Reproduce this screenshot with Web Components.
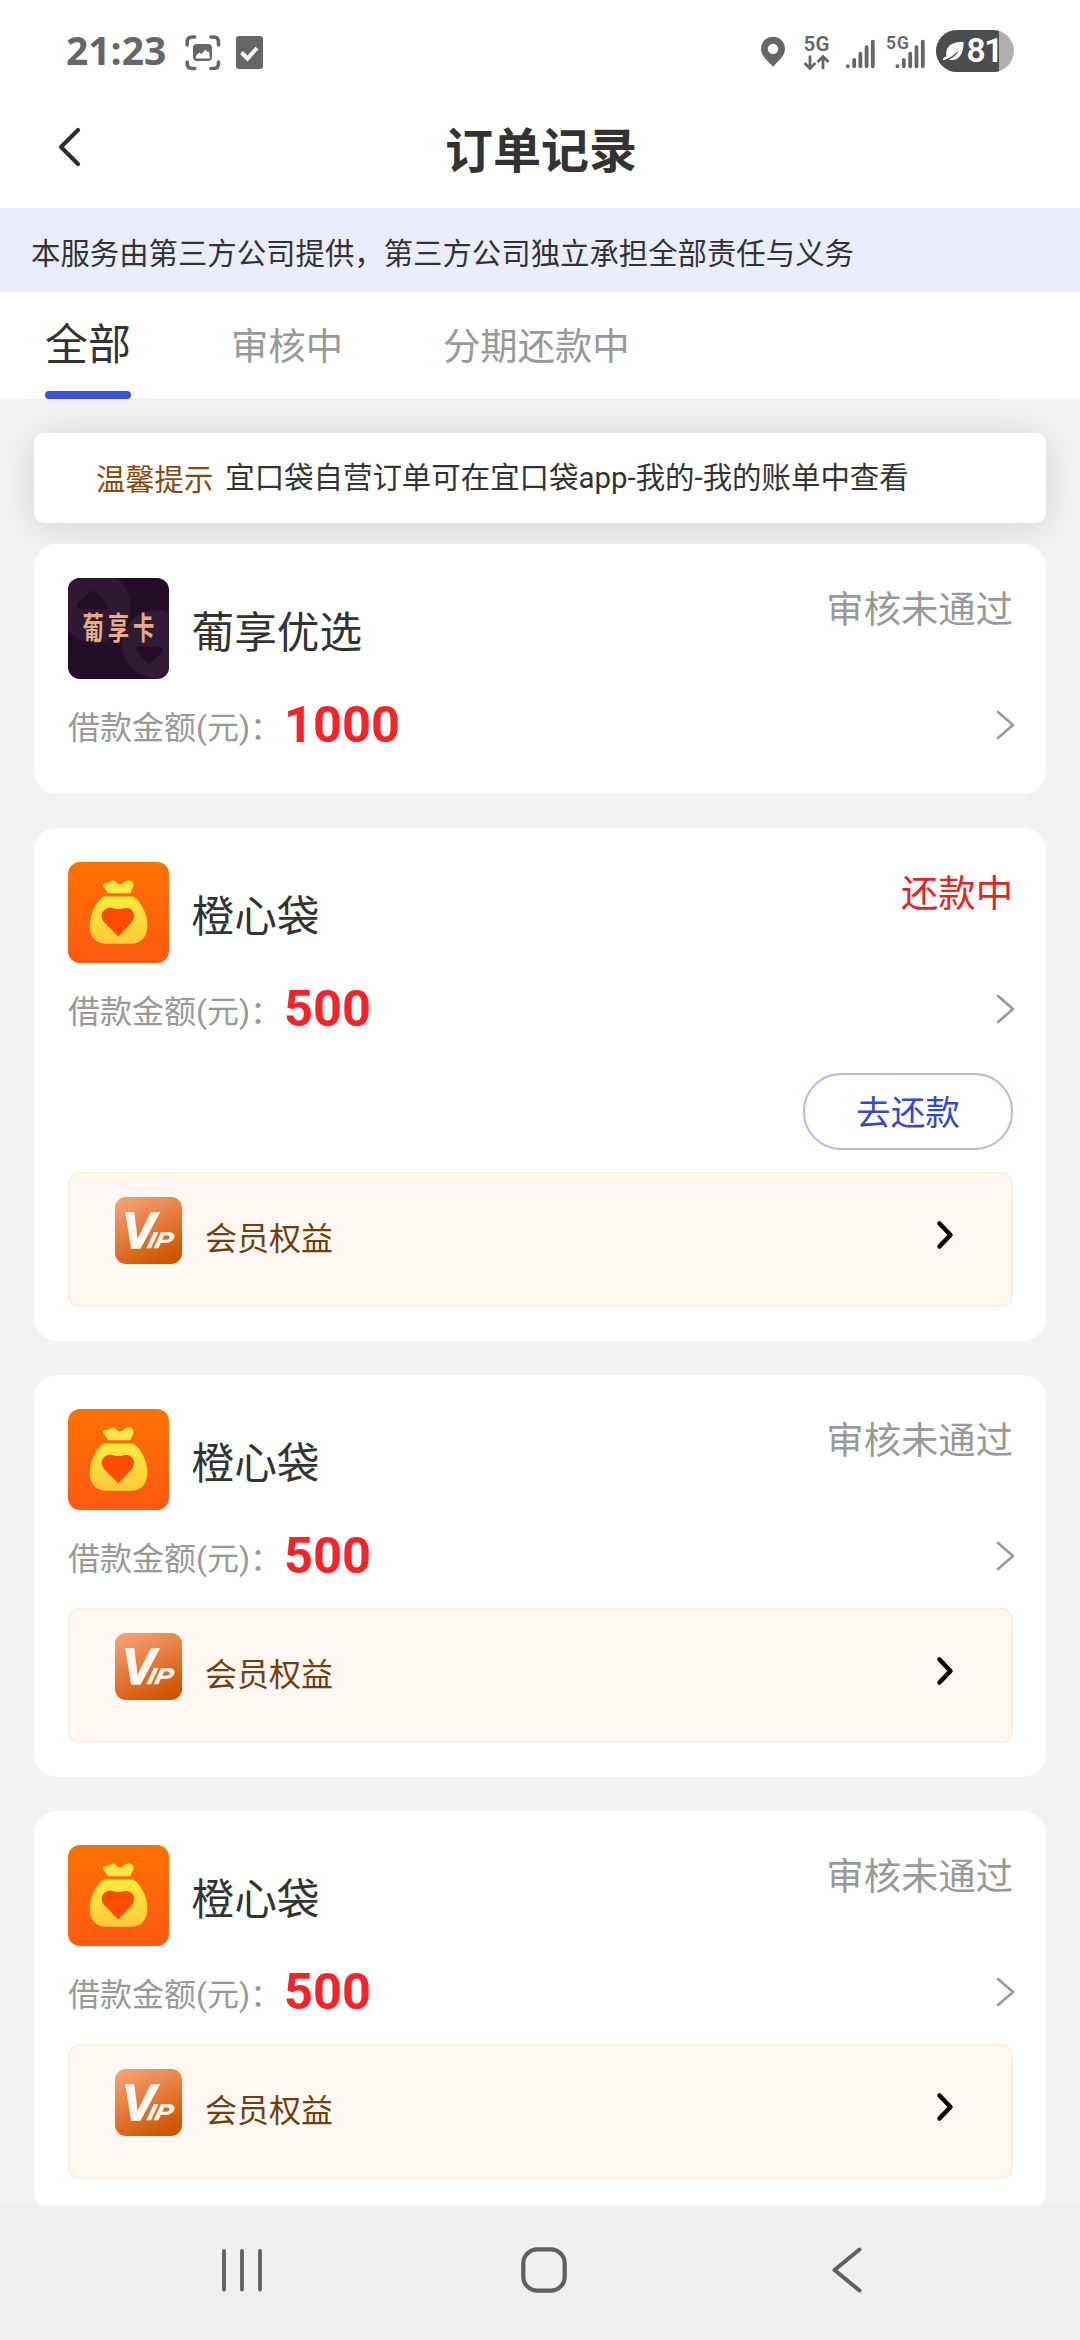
<!DOCTYPE html>
<html lang="zh-CN">
<head>
<meta charset="utf-8">
<title>订单记录</title>
<style>
html,body{margin:0;padding:0}
body{width:1080px;height:2340px;overflow:hidden;background:#f3f3f3;font-family:"Noto Sans CJK SC",sans-serif;color:#333}
</style>
</head>
<body>
<order-page></order-page>
<script>
function define(name, html, setup) {
  customElements.define(name, class extends HTMLElement {
    constructor() {
      super();
      this.attachShadow({mode: 'open'});
    }
    connectedCallback() {
      this.shadowRoot.innerHTML = typeof html === 'function' ? html(this) : html;
      if (setup) setup(this);
    }
  });
}

define('status-bar', `
<style>
:host{display:flex;height:104px;box-sizing:border-box;align-items:flex-start;color:#666}
.left,.right{display:flex;align-items:flex-start}
.left{padding-left:66px}
.time{font:700 39px/56px "Open Sans",sans-serif;margin-top:22px;letter-spacing:0;width:101px;white-space:nowrap}
svg{display:block}
.right{margin-left:auto}
text{font-family:Roboto,sans-serif;font-weight:600}
</style>
<div class="left">
  <span class="time">21:23</span>
  <svg width="120" height="104" viewBox="167 0 120 104" fill="none" stroke="#666">
    <g stroke-width="3.6" stroke-linecap="round">
      <path d="M187.200 45V42q0-5 5-5h2.500M211 37h2.500q5 0 5 5v3M218.500 62v1.500q0 5-5 5h-2.500M194.700 68.500h-2.500q-5 0-5-5V62"/>
    </g>
    <rect x="193" y="44" width="19" height="17" rx="4" fill="#666" stroke="none"/>
    <path d="M195.500 58.500l1-3.500 3-2.500 2 1.500 4-4.500 2 2.500 1.500-.5 1 7z" fill="#fff" stroke="none"/>
    <rect x="236" y="36" width="27" height="33" rx="3" fill="#666" stroke="none"/>
    <path d="M241.500 52.500l6 6 9.500-10.500" stroke="#fff" stroke-width="4"/>
  </svg>
</div>
<div class="right">
  <svg width="330" height="104" viewBox="750 0 330 104">
    <defs><clipPath id="b"><rect x="936" y="30" width="78" height="42" rx="21"/></clipPath></defs>
    <path fill="#666" fill-rule="evenodd" d="M773 36.700c-6.900 0-12 5.300-12 12 0 7.500 7 12.300 12 18 5-5.700 12-10.500 12-18 0-6.700-5.100-12-12-12zm0 7a5.200 5.200 0 1 1 0 10.400 5.200 5.200 0 0 1 0-10.400z"/>
    <text x="803.500" y="51" font-size="20.500" textLength="26" fill="#666">5G</text>
    <path d="M810 55.500V68M804.500 63l5.500 5.500 5.500-5.500M823 69V56.500M817.500 62l5.500-5.500 5.500 5.500" fill="none" stroke="#666" stroke-width="2.800"/>
    <g stroke="#666" stroke-width="3.800" stroke-linecap="round">
      <path d="M847.800 66.200v.1M854.200 60v6.300M860.400 53.700v12.600M866.600 47.200v19.100M872.800 41.600v24.700"/>
      <path d="M897.400 66.200v.1M903.800 60v6.300M910.200 53.700v12.600M916.500 47.200v19.100M922.800 41.600v24.700"/>
    </g>
    <text x="886" y="49" font-size="17.500" textLength="23" fill="#666">5G</text>
    <g clip-path="url(#b)">
      <rect x="936" y="30" width="78" height="42" fill="#b0b0b0"/>
      <rect x="936" y="30" width="63" height="42" fill="#4d4d4d"/>
    </g>
    <path fill="#fff" d="M946.500 56.500c-2-8.500 4-15.500 17-14.500.5 13-6 20-14.500 17.500 4-1.500 8-5 9.500-9-4 4.500-9 7.500-12 8.500-1.500.8-2 1.500-3.500 1 0-1.800 1-3 3.500-3.500z"/>
    <text x="966.500" y="62" font-size="33.500" fill="#fff" textLength="37">81</text>
    <rect x="999" y="36" width="6" height="28" fill="#b0b0b0"/>
  </svg>
</div>`);

define('nav-header', `
<style>
:host{display:grid;grid-template-columns:140px 1fr 140px;height:104px}
svg{display:block}
h1{margin:0;text-align:center;font-weight:700;font-size:48px;line-height:86px;color:#333;padding-left:2px}
</style>
<svg width="140" height="104" viewBox="0 104 140 104"><path d="M78 130L61 147l17 17" fill="none" stroke="#2d2d2d" stroke-width="4.200" stroke-linecap="round" stroke-linejoin="round"/></svg>
<h1><slot></slot></h1>`);

define('notice-bar', `
<style>
:host{display:block;height:84px;padding-left:31px;background:#ebedfd;font-size:29.400px;line-height:87px;white-space:nowrap;overflow:hidden}
</style><slot></slot>`);

define('tab-bar', `
<style>
:host{display:flex;height:107px;background:#fff;padding-left:45px;gap:100px}
</style><slot></slot>`);

define('tab-item', `
<style>
:host{display:flex;flex-direction:column;justify-content:space-between;font-size:37.330px;color:#999;white-space:nowrap}
:host([active]){font-size:43px;color:#333}
span{line-height:105px;height:99px}
:host([active]) span{line-height:99px}
i{display:none;height:8px;border-radius:4px;background:#3c50e0}
:host([active]) i{display:block}
</style><span><slot></slot></span><i></i>`);

define('tip-card', `
<style>
:host{display:flex;align-items:center;height:90px;box-sizing:border-box;padding:0 0 2px 62px;border-radius:10px;background:#fff;
 box-shadow:0 4px 42px rgba(0,0,0,.13);font-size:29.300px;line-height:40px;white-space:nowrap;gap:12px}
b{font-weight:400;color:#874a0c}
div{font-family:Roboto,"Noto Sans CJK SC",sans-serif;font-size:29.440px;padding-top:2px}
</style><b><slot name="label"></slot></b><div><slot></slot></div>`);

const logos = {
  grape: `<svg viewBox="0 0 101 101">
    <rect width="101" height="101" fill="#220f26"/>
    <circle cx="27" cy="29" r="36" fill="#2e1930"/>
    <circle cx="88" cy="66" r="34" fill="#301b32"/>
    <path d="M25 12l14 13c3 4-1 8-6 6H15c-5 1-8-3-5-7z" fill="#210e25"/>
    <path d="M81 86L69 74c-2-4 2-7 6-5h13c4-2 8 1 6 5z" fill="#210e25"/>
    <text transform="translate(14.500 61) scale(.82 1.180)" font-size="26" letter-spacing="4.800" font-weight="700" fill="#e5ac88">葡享卡</text></svg>`,
  bag: `<svg viewBox="0 0 101 101">
    <defs><linearGradient id="o" x2="0" y2="1"><stop stop-color="#ff7200"/><stop offset="1" stop-color="#ff5912"/></linearGradient>
    <linearGradient id="y" x2="0" y2="1"><stop stop-color="#ffeb3d"/><stop offset="1" stop-color="#ffca38"/></linearGradient></defs>
    <rect width="101" height="101" fill="url(#o)"/>
    <path fill="#ffe545" d="M35 24c-1-2 1-3 3-3 3 0 4-2 7-2.500 3 0 4 4 7 4s4-4 8-4c4-.5 6 2 5.500 5.500-.5 2.500-2 3-2.500 6l-.5 1.200H39.500l-1-2.200c-1-2.500-2.500-3-3.500-5z"/>
    <path fill="url(#y)" d="M36 34.400h29c8 4.600 14.300 17.600 14.300 28.600 0 12-6 18.700-16 18.700H38c-10 0-16.300-6.700-16.300-17.700C21.700 52 28 39 36 34.400z"/>
    <path fill="#ff4c05" d="M50.300 74.500L37 61c-8-8.500.5-18 9-14.500 2.500.800 4.300.800 8.500 0C63 43.500 70.500 52.500 63 61z"/></svg>`
};

define('app-logo', el => `
<style>:host{display:block;width:101px;height:101px;flex:none;border-radius:12px;overflow:hidden}svg{display:block;width:101px;height:101px}</style>
${logos[el.getAttribute('kind')]}`);

define('pay-button', `
<style>
:host{display:block;box-sizing:border-box;width:210px;height:77px;border:2px solid #b4b8e2;border-radius:38px;
 text-align:center;font-size:34.670px;line-height:70px;color:#3549cf}
</style><slot></slot>`);

define('vip-row', `
<style>
:host{display:flex;align-items:flex-start;box-sizing:border-box;height:135px;padding:23px 56px 0 45px;border:2px solid #fdeee3;border-radius:11px;background:#fff7f1}
svg{display:block;flex:none}
span{font-size:32px;line-height:78px;color:#71400e;margin-left:23px}
.go{margin:22px 0 0 auto}
text{font-family:"Liberation Sans",sans-serif;font-weight:700;font-style:italic;fill:#fff8f0;stroke:#fff8f0}
</style>
<svg width="67" height="67" viewBox="0 0 67 67">
  <defs><linearGradient id="g" x1=".2" x2=".65" y2="1"><stop stop-color="#f4a071"/><stop offset=".5" stop-color="#e57a3b"/><stop offset="1" stop-color="#ce5500"/></linearGradient></defs>
  <rect width="67" height="67" rx="11" fill="url(#g)"/>
  <path d="M10.500 15.500h7v5H12z" fill="#fff8f0"/>
  <text x="7" y="51" font-size="50" stroke-width="1.500">V</text>
  <text transform="translate(31.500 51.300) skewX(-13)" font-size="22.500" stroke-width=".5" textLength="25" lengthAdjust="spacingAndGlyphs">IP</text>
</svg>
<span><slot></slot></span>
<svg class="go" width="20" height="32" viewBox="0 0 20 32"><path d="M4.500 4.500L15.500 16 4.500 27.500" fill="none" stroke="#000" stroke-width="4.500" stroke-linecap="round" stroke-linejoin="round"/></svg>`);

define('order-card', el => `
<style>
:host{display:block;box-sizing:border-box;background:#fff;border-radius:23px;padding:34px 33px 17px 34px;flex:none}
:host([vip]){padding-bottom:34px}
.head{display:flex;height:101px;align-items:flex-start}
.name{font-size:42.670px;line-height:103px;margin-left:22.500px}
.status{margin-left:auto;font-size:37.330px;line-height:58px;color:#999}
.status.red{color:#e42327}
.amount{display:flex;height:98px;align-items:flex-start}
.sum{display:flex;align-items:flex-start}
.label{font-family:Roboto,"Noto Sans CJK SC",sans-serif;font-size:32px;line-height:40px;color:#999;white-space:pre;margin-top:29px}
.num{font:700 50.500px/92px Roboto,sans-serif;color:#fb2227;margin-left:2px}
.chev{display:block;margin:29px -1.500px 0 auto}
.action{display:flex;justify-content:flex-end;height:110.500px;padding-top:12px;box-sizing:border-box}
</style>
<div class="head">
  <app-logo kind="${el.getAttribute('logo')}"></app-logo>
  <span class="name">${el.getAttribute('name')}</span>
  <span class="status ${el.hasAttribute('due') ? 'red' : ''}">${el.getAttribute('status')}</span>
</div>
<div class="amount">
  <div class="sum"><span class="label">借款金额(元)：</span><span class="num">${el.getAttribute('amount')}</span></div>
  <svg class="chev" width="20" height="34" viewBox="0 0 20 34"><path d="M3 4l15 13L3 30" fill="none" stroke="#999" stroke-width="2.600" stroke-linecap="round" stroke-linejoin="round"/></svg>
</div>
${el.hasAttribute('due') ? '<div class="action"><pay-button>去还款</pay-button></div>' : ''}
${el.hasAttribute('vip') ? '<vip-row>会员权益</vip-row>' : ''}`);

define('system-nav', `
<style>
:host{display:block;height:135px;background:#f0f0f2;flex:none}
svg{display:block}
</style>
<svg width="1080" height="135" viewBox="0 2205 1080 135" fill="none" stroke="#606060" stroke-linecap="round">
  <path d="M224 2251v38.500M242 2251v38.500M260 2251v38.500" stroke-width="3.800"/>
  <rect x="523.300" y="2249.300" width="41.400" height="41.400" rx="14" stroke-width="4.200"/>
  <path d="M859.500 2249.500L834.500 2270l25 20.500" stroke-width="4" stroke-linejoin="round"/>
</svg>`);

define('order-page', `
<style>
:host{display:flex;flex-direction:column;height:2340px;background:#f3f3f3}
.top{background:#fff;flex:none}
.list{flex:1;min-height:0;overflow:hidden;display:flex;flex-direction:column;padding:34px 34px 0}
tip-card{margin-bottom:21px;flex:none}
.cards{display:flex;flex-direction:column;gap:34px;position:relative}
</style>
<div class="top">
  <status-bar></status-bar>
  <nav-header>订单记录</nav-header>
  <notice-bar>本服务由第三方公司提供，第三方公司独立承担全部责任与义务</notice-bar>
  <tab-bar><tab-item active>全部</tab-item><tab-item>审核中</tab-item><tab-item>分期还款中</tab-item></tab-bar>
</div>
<div class="list">
  <tip-card><span slot="label">温馨提示</span>宜口袋自营订单可在宜口袋app-我的-我的账单中查看</tip-card>
  <div class="cards">
    <order-card logo="grape" name="葡享优选" status="审核未通过" amount="1000"></order-card>
    <order-card logo="bag" name="橙心袋" status="还款中" amount="500" due vip></order-card>
    <order-card logo="bag" name="橙心袋" status="审核未通过" amount="500" vip></order-card>
    <order-card logo="bag" name="橙心袋" status="审核未通过" amount="500" vip></order-card>
  </div>
</div>
<system-nav></system-nav>`);
</script>
</body>
</html>
